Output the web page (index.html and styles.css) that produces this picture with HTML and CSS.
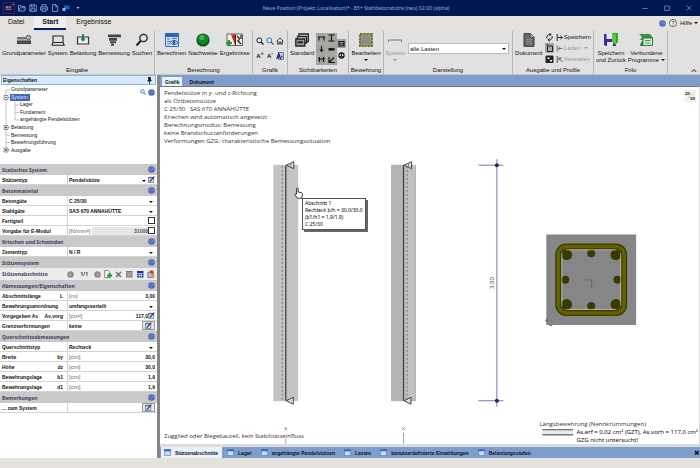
FILE: index.html
```html
<!DOCTYPE html>
<html lang="de">
<head>
    <meta charset="UTF-8">
    <meta name="viewport" content="width=device-width, initial-scale=1.0">
    <title>B5+ Stahlbetonstütze</title>
    <link rel="stylesheet" href="styles.css">
</head>
<body>
    <svg class="defs" aria-hidden="true">
        <symbol id="up" viewBox="0 0 8 8"><circle cx="4" cy="4" r="3.7" fill="#3f5fb4"/><circle cx="4" cy="4" r="2.6" fill="#7f97d6"/><path d="M2.5 4L4 2.5 5.500 4M2.500 5.800L4 4.300 5.500 5.800" fill="none" stroke="#1f3a94" stroke-width=".8"/></symbol>
        <symbol id="edit" viewBox="0 0 8 8"><path d="M.5 1.500h6v6h-6z" fill="#dbe7fa" stroke="#2a4d94" stroke-width=".7"/><path d="M.5 1.200h6v1.500h-6z" fill="#3b6fc8"/><path d="M2 6.500L6.500 1.500" stroke="#333" stroke-width="1.400"/><path d="M6.200 1.800L7.300.6" stroke="#c22" stroke-width="1.400"/></symbol>
        <symbol id="win" viewBox="0 0 7 7"><path d="M.5.5h6v6h-6z" fill="#c9dcf8" stroke="#5f82b8" stroke-width=".7"/><path d="M.3.3h6.400v2H.3z" fill="#3566c4"/></symbol>
        <symbol id="zoom" viewBox="0 0 8 8"><circle cx="3.300" cy="3.300" r="2.400" fill="#eef3fa" stroke="currentColor"/><path d="M5.100 5.100L7.500 7.500" stroke="currentColor" stroke-width="1.300"/></symbol>
    </svg>

    <header class="titlebar">
        <div class="quick">
            <svg width="12" height="12" viewBox="0 0 12 12"><path d="M.5.5h11v11H.5z" fill="#1a1244" stroke="#3a3a78" stroke-width=".6"/><text x="2.500" y="8" font-size="5" fill="#b9b4e0">B5</text><path d="M9 2.500h2M10 1.500v2" stroke="#aaa5dd" stroke-width=".5"/></svg>
            <svg width="8" height="8" viewBox="0 0 8 8" fill="none" stroke="#8fb0e0" stroke-width=".8"><path d="M.5 7V1.500h2.500l.8 1h3v1.300M.5 7l1.500-3.200h5.500L6.300 7z"/></svg>
            <svg width="8" height="8" viewBox="0 0 8 8" fill="none" stroke="#8fb0e0" stroke-width=".8"><path d="M.8.8h5.700l.8.8v5.700H.8zM2.300 1v2h3V1M2 7V4.800h4V7"/></svg>
            <svg width="8" height="8" viewBox="0 0 8 8" fill="none" stroke="#8fb0e0" stroke-width=".8"><path d="M2 3V.7h4V3M2 6H.6V3h6.800v3H6M2 4.800h4v2.500H2z"/></svg>
            <svg width="8" height="8" viewBox="0 0 8 8" fill="none" stroke="#8fb0e0" stroke-width=".8"><path d="M1.500.6h3.300l1.800 1.900v4.900H1.500zM4.700.7v2h2"/></svg>
            <svg width="8" height="8" viewBox="0 0 8 8"><path d="M2 1.500h5.500v3.500H2z" fill="#1d5fd0"/><path d="M.5 4h3v3h-3z" fill="#7fb6f5"/></svg>
            <svg class="more" width="4" height="4" viewBox="0 0 4 4"><path d="M.5 1h3L2 3z" fill="#b8c8e8"/></svg>
        </div>
        <h1>Neue Position (Projekt: Localisation)* - B5+ Stahlbetonstütze (neu) 02/20 (alpha)</h1>
        <div class="winbtns">
            <button aria-label="Minimieren"><svg width="6" height="6" viewBox="0 0 6 6" stroke="#6f8fd0" stroke-width=".8"><path d="M.5 3.500h5"/></svg></button>
            <button aria-label="Maximieren"><svg width="6" height="6" viewBox="0 0 6 6" fill="none" stroke="#6f8fd0" stroke-width=".8"><path d="M.7 1h4.600v4.500H.7z"/></svg></button>
            <button aria-label="Schließen"><svg width="6" height="6" viewBox="0 0 6 6" stroke="#6f8fd0" stroke-width=".8"><path d="M.7.700l4.600 4.600M5.300.700L.7 5.300"/></svg></button>
        </div>
    </header>

    <nav class="menu">
        <button>Datei</button>
        <button class="active">Start</button>
        <button>Ergebnisse</button>
        <div class="help">
            <svg width="7" height="7"><use href="#up"/></svg>
            <svg width="8" height="8" viewBox="0 0 8 8"><circle cx="4" cy="4" r="3.500" fill="#fff" stroke="#222" stroke-width=".7"/><path d="M2.900 3.200c0-1.500 2.300-1.400 2.200 0-.1.900-1.100.8-1.100 1.700M4 5.500v.8" fill="none" stroke="#222" stroke-width=".8"/></svg>
            <button class="arrow">Hilfe</button>
        </div>
    </nav>

    <section class="ribbon">
        <div class="group">
            <div class="tools">
                <button class="tool"><svg width="16" height="14" viewBox="0 0 16 14"><path d="M1 4h9v2.500H1z" fill="#777"/><path d="M1 7.500h14v3.500H1z" fill="#333"/><circle cx="12.500" cy="4.500" r="2.200" fill="#bbb" stroke="#555"/><path d="M2 9.300h12" stroke="#999" stroke-width=".6"/></svg>Grundparameter</button>
                <button class="tool"><svg width="14" height="14" viewBox="0 0 14 14" fill="none" stroke="#222" stroke-width="1.100"><path d="M2 3h10v6.500H2zM.8 12.300h12.400L12 9.500M2 9.500L.8 12.300"/></svg>System</button>
                <button class="tool"><svg width="14" height="14" viewBox="0 0 14 14"><path d="M1.500 4h11v7h-11z" fill="#eee" stroke="#333" stroke-width="1.200"/><path d="M7 1v6" stroke="#0b6a6a" stroke-width="1.600"/><path d="M4.500 5.500h5L7 8.700z" fill="#0b6a6a"/></svg>Belastung</button>
                <button class="tool"><svg width="14" height="14" viewBox="0 0 14 14" fill="#444"><path d="M1 1.500h13v2.800H1zM2 5h8v2.700H2zM3 8.300h6v2H3zM4 10.800h3v2H4z"/></svg>Bemessung</button>
                <button class="tool"><svg width="14" height="14" viewBox="0 0 14 14" fill="none" stroke="#222"><circle cx="8.500" cy="5" r="3.700" stroke-width="1.300"/><path d="M5.800 7.800L1.500 12.500" stroke-width="2"/></svg>Suchen</button>
            </div>
            <h2>Eingabe</h2>
        </div>
        <div class="group">
            <div class="tools">
                <button class="tool"><svg width="14" height="14" viewBox="0 0 14 14"><path d="M.5.5h13v13H.5z" fill="#cfe2f7" stroke="#3a6cb5"/><path d="M.5.5h13v3.500H.5z" fill="#2f62c0"/><path d="M2 6h3M2 8.500h3M2 11h3M7 5.500h5" stroke="#4779bd" stroke-width="1.200"/><path d="M5 9.500q4-4 8 0-4 4-8 0z" fill="#fff" stroke="#1c4d96"/><circle cx="9" cy="9.500" r="1.400" fill="#124a9b"/></svg>Berechnen</button>
                <button class="tool"><svg width="14" height="14" viewBox="0 0 14 14"><circle cx="7" cy="7" r="6.600" fill="#0a5a17"/><circle cx="7" cy="6.300" r="5.300" fill="#12872a"/><circle cx="5.800" cy="4.500" r="2.500" fill="#3fb257"/></svg>Nachweise</button>
                <button class="tool"><svg width="17" height="14" viewBox="0 0 17 14"><path d="M1 1h15.500v11.500H1z" fill="#f2efe4" stroke="#444" stroke-width=".8"/><path d="M5 1.500l4 10.500V1.500z" fill="#d22"/><path d="M9.500 1.500v10.500" stroke="#222"/><path d="M11 3q4 3 1 5l3 3M15 2v4" stroke="#222" fill="none" stroke-width="1.300"/><path d="M0 10h6M3 7v6" stroke="#159a2d" stroke-width="2"/></svg>Ergebnisse</button>
            </div>
            <h2>Berechnung</h2>
        </div>
        <div class="group">
            <div class="grid3">
                <button aria-label="Lupe"><svg width="8" height="8"><use href="#zoom"/></svg></button>
                <button class="blue" aria-label="Zoom"><svg width="8" height="8"><use href="#zoom"/></svg></button>
                <button aria-label="Gesamtansicht"><svg width="8" height="8" viewBox="0 0 8 8" fill="#eee" stroke="#222" stroke-width=".9"><path d="M.7 4.300L4 1l3.300 3.300M1.700 3.800v3.400h1.500V5h1.600v2.200h1.500V3.800"/></svg></button>
                <button>A<sup>+</sup></button>
                <button>A<sup>-</sup></button>
                <button aria-label="Schriftfarbe"><svg width="8" height="8" viewBox="0 0 8 8"><path d="M2.500.5H7.500v7h-5z" fill="#bcd0f2" stroke="#2c4ea3" stroke-width=".7"/><path d="M5 3l2.500 2.500H5z" fill="#c22"/><path d="M.7 7L2.700 1.500 4.700 7M1.500 5.200h2.500" fill="none" stroke="#15235c" stroke-width="1.100"/></svg></button>
            </div>
            <h2>Grafik</h2>
        </div>
        <div class="group">
            <div class="tools">
                <button class="tool"><svg width="14" height="14" viewBox="0 0 14 14" fill="none" stroke="#222" stroke-width="1.300"><path d="M4 4V1h9.300v7.500H11M2.500 6V3.500h9V10H9.500"/><path d="M.8 6h9v7h-9z" fill="#999"/><path d="M2.500 9.300h5.500" stroke-width="2"/></svg>Standard</button>
                <svg class="toggles" width="30" height="34" viewBox="0 0 30 34">
                    <path d="M0 1h21v32H0zM21 7h9v9h-9z" fill="#a5a39f"/>
                    <path d="M.2 11.500h20.600M.2 22.500h20.600M10.500 1v32" stroke="#bbb9b5" stroke-width=".5"/>
                    <g fill="none" stroke="#111" stroke-width="1.100"><path d="M2 5h7M3 5v3.500M8 5v3.500M12.500 3h6M12.500 9h6M15.500 3v6M5.500 14v5M3.800 17.500l1.700 2 1.700-2M2 27h7M3.500 25v5M7.500 25v5M13 25v5.500h6M13 30.500l5-5M23 9.500h5v4.500h-5zM23 12h5"/><path d="M12.500 17.300h6" stroke-width="2.400"/><circle cx="25.500" cy="23.500" r="2.600" fill="#eee"/><path d="M25.500 21v3l2 1M25.500 24l-2 1"/></g>
                </svg>
            </div>
            <h2>Sichtbarkeiten</h2>
        </div>
        <div class="group">
            <div class="tools">
                <button class="tool"><svg width="14" height="14" viewBox="0 0 14 14"><path d="M1 1h12v12H1z" fill="#999" stroke="#77751c" stroke-width="2" stroke-dasharray="2.500 .7"/><path d="M3 3h8v8H3z" fill="#8a8a88"/></svg>Bearbeiten<i class="tri"></i></button>
            </div>
            <h2>Bewehrung</h2>
        </div>
        <div class="group">
            <div class="tools wide">
                <button class="tool" disabled><svg width="16" height="14" viewBox="0 0 16 14" fill="none" stroke="#777"><path d="M1.500 9V7h13v2"/></svg>System<i class="tri"></i></button>
                <label class="drop"><select aria-label="Lasten"><option>alle Lasten</option></select></label>
            </div>
            <h2>Darstellung</h2>
        </div>
        <div class="group">
            <div class="tools">
                <button class="tool"><svg width="12" height="14" viewBox="0 0 12 14"><path d="M1 .7h6.500L11 4.200v9.100H1z" fill="#6d6d6d" stroke="#333"/><path d="M7.300.7v3.700H11" fill="#ccc" stroke="#333" stroke-width=".7"/><path d="M3 6.500h6M3 8.500h6M3 10.500h6" stroke="#999" stroke-width=".6"/></svg>Dokument</button>
                <svg class="toggles" width="9" height="32" viewBox="0 0 9 32" fill="none" stroke="#222"><path d="M0 11h9v10H0z" fill="#a9a7a3" stroke="none"/><path d="M2 6.500A3 3 0 0 1 5.500 2.500M7 4a3 3 0 0 1-3.500 4M4.500 1l1.500 1.500-1.500 1.500M4.500 6.500L3 8l1.500 1.500"/><path d="M2.500 14h5v5.500h-5z"/><path d="M1 13h3M2.500 11.700v3" stroke="#0a8a2a"/><path d="M1 24h7v6.500H1z" fill="#222"/><path d="M2.500 25.500h2v1.500h-2zM5 28h2v1.500H5z" fill="#fff" stroke="none"/></svg>
                <div class="stack">
                    <button><svg width="7" height="7" viewBox="0 0 7 7" stroke="#222"><path d="M1.200 0v7M2 3.500h4.500M4.500 1.800l1.800 1.700-1.800 1.700" fill="none"/></svg>Speichern</button>
                    <button disabled class="arrow"><svg width="7" height="7" viewBox="0 0 7 7" stroke="#777"><path d="M1.200 0v7M2 3.500h4.500M4 1.800L2.300 3.500 4 5.200" fill="none"/></svg>Laden</button>
                    <button disabled><svg width="7" height="7" viewBox="0 0 7 7" stroke="#555"><path d="M1.200 0v7M3 2l3.500 4M3 4.500V2h2.500" fill="none"/></svg>Verwalten</button>
                </div>
            </div>
            <h2>Ausgabe und Profile</h2>
        </div>
        <div class="group">
            <div class="tools">
                <button class="tool"><svg width="14" height="14" viewBox="0 0 14 14"><path d="M0 1h12v12H1.500L0 11.500z" fill="#3d2a9a"/><path d="M2.500 1h6v5h-6zM3 9h6v4H3z" fill="#e6e4f5"/><path d="M8 0h6v9l-3 3V3z" fill="#39a52c"/><path d="M8 0l4 2v10L8 9z" fill="#58c83e"/></svg><span>Speichern<br>und Zurück</span></button>
                <button class="tool"><svg width="15" height="14" viewBox="0 0 15 14"><path d="M0 1h11l3 4-3 2H1l2-3z" fill="#36943a"/><path d="M4 5h9.500v7.500H4z" fill="#d9eddd" stroke="#2b7b33"/><path d="M6 7.500h5.500M6 10h5.500" stroke="#3a9a45"/><path d="M1 13q1-5 3-5v5z" fill="#2b7b33"/></svg><span class="arrow">Verbundene<br>Programme</span></button>
            </div>
            <h2>Frilo</h2>
        </div>
        <div class="group last"><button aria-label="Menüband reduzieren"><svg width="6" height="5" viewBox="0 0 6 5"><path d="M.8 4L3 1.500 5.200 4" fill="none" stroke="#222"/></svg></button></div>
    </section>

    <main>
        <aside class="props">
            <header class="caption">Eigenschaften<svg width="5" height="7" viewBox="0 0 5 7" fill="#111"><path d="M1.200 0h2.600v3.300h.8v1H.4v-1h.8zM2.100 4h.8v3h-.8z"/></svg></header>
            <div class="tree">
                <svg class="lines" width="24" height="68" viewBox="0 0 24 68" fill="none" stroke="#aaa" stroke-width=".7">
                    <path d="M6 4v60M6 4h4M6 11.500h4M6 41.500h4M6 49h4M6 56.500h4M6 64h4M15 16v18M15 19h4M15 26.500h4M15 34h4"/>
                    <path d="M4 9.500h4v4H4zM4 39.500h4v4H4zM4 62h4v4H4z" fill="#fff" stroke="#667"/>
                    <path d="M5 11.500h2M5 41.500h2M6 40.500v2M5 64h2M6 63v2" stroke="#112"/>
                </svg>
                <ul>
                    <li>Grundparameter</li>
                    <li><span class="selected">System</span></li>
                    <li class="sub">Lager</li>
                    <li class="sub">Fundament</li>
                    <li class="sub">angehängte Pendelstützen</li>
                    <li>Belastung</li>
                    <li>Bemessung</li>
                    <li>Bewehrungsführung</li>
                    <li>Ausgabe</li>
                </ul>
                <div class="treetools"><svg class="blue" width="6" height="6"><use href="#zoom"/></svg><svg width="7" height="7"><use href="#up"/></svg></div>
            </div>

            <h3>Statisches System<svg><use href="#up"/></svg></h3>
            <div class="row"><label for="typ">Stützentyp</label><span class="drop"><select id="typ"><option>Pendelstütze</option></select></span><button class="edit" aria-label="Stützentyp bearbeiten"><svg><use href="#edit"/></svg></button></div>

            <h3>Betonmaterial<svg><use href="#up"/></svg></h3>
            <div class="row"><label for="beton">Betongüte</label><span class="drop"><select id="beton"><option>C 25/30</option></select></span></div>
            <div class="row"><label for="stahl">Stahlgüte</label><span class="drop"><select id="stahl"><option>SAS 670 ANNAHÜTTE</option></select></span></div>
            <div class="row"><label for="fertig">Fertigteil</label><span class="fill"></span><input type="checkbox" id="fertig"></div>
            <div class="row"><label for="emodul">Vorgabe für E-Modul</label><span class="unit">[N/mm²]</span><input type="text" class="locked" id="emodul" value="31000" readonly><input type="checkbox" aria-label="E-Modul vorgeben"></div>

            <h3>Kriechen und Schwinden<svg><use href="#up"/></svg></h3>
            <div class="row"><label for="zement">Zementtyp</label><span class="drop"><select id="zement"><option>N / R</option></select></span></div>

            <h3>Stützensystem<svg><use href="#up"/></svg></h3>
            <div class="sections">
                <span>Stützenabschnitte</span>
                <div class="pager">
                    <button aria-label="Zurück"><svg width="7" height="7" viewBox="0 0 7 7"><circle cx="3.500" cy="3.500" r="3.200" fill="#888"/><path d="M4.200 2L2.700 3.500 4.200 5" fill="none" stroke="#ddd"/></svg></button>
                    <span>1/1</span>
                    <button aria-label="Vor"><svg width="7" height="7" viewBox="0 0 7 7"><circle cx="3.500" cy="3.500" r="3.200" fill="#888"/><path d="M2.800 2l1.500 1.500L2.800 5" fill="none" stroke="#ddd"/></svg></button>
                    <button aria-label="Neu"><svg width="8" height="8" viewBox="0 0 8 8"><path d="M.7.5h3.500l1.500 1.500v5.500h-5z" fill="#fff" stroke="#555" stroke-width=".7"/><path d="M3 5.500h5M5.500 3v5" stroke="#159a2d" stroke-width="1.800"/></svg></button>
                    <button aria-label="Löschen"><svg width="7" height="7" viewBox="0 0 7 7" stroke="#666" stroke-width="1.300"><path d="M1 1l5 5M6 1L1 6"/></svg></button>
                    <button aria-label="Tabelle"><svg width="8" height="8" viewBox="0 0 8 8"><path d="M1 1h6.500v6.500H1z" fill="#777"/><path d="M1 3h6.500M1 5.200h6.500M3.200 3v4.500M5.300 3v4.500" stroke="#ddd" stroke-width=".5"/></svg></button>
                    <button aria-label="Tabelle bearbeiten"><svg width="8" height="8" viewBox="0 0 8 8"><path d="M1 1h6.500v6.500H1z" fill="#123a7d"/><path d="M1 3.500h6.500M1 5.500h6.500M3.200 3.500v4M5.300 3.500v4" stroke="#dfe8f8" stroke-width=".7"/></svg></button>
                    <button aria-label="Eingabehilfe"><svg width="8" height="8" viewBox="0 0 8 8"><path d="M1 2h5v5.500H1z" fill="#b9c9e8" stroke="#2a4d94" stroke-width=".7"/><path d="M3 .5h3.500v3H3z" fill="#c33"/><path d="M4 4.500h3.500v3H4z" fill="#e59a2a"/></svg></button>
                </div>
            </div>

            <h3>Abmessungen/Eigenschaften<svg><use href="#up"/></svg></h3>
            <div class="row"><label for="len">Abschnittslänge <b>L</b></label><span class="unit">[m]</span><input type="text" id="len" value="3,00"></div>
            <div class="row"><label for="anord">Bewehrungsanordnung</label><span class="drop"><select id="anord"><option>umfangsverteilt</option></select></span></div>
            <div class="row"><label for="as">Vorgegeben As <b>As,vorg</b></label><span class="unit">[cm²]</span><input type="text" id="as" value="117,0"><button class="edit" aria-label="As bearbeiten"><svg><use href="#edit"/></svg></button></div>
            <div class="row"><label for="grenz">Grenzverformungen</label><input type="text" class="left" id="grenz" value="keine"><button class="edit framed" aria-label="Grenzverformungen bearbeiten"><svg><use href="#edit"/></svg></button></div>

            <h3>Querschnittsabmessungen<svg><use href="#up"/></svg></h3>
            <div class="row"><label for="quer">Querschnittstyp</label><span class="drop"><select id="quer"><option>Rechteck</option></select></span></div>
            <div class="row"><label for="by">Breite <b>by</b></label><span class="unit">[cm]</span><input type="text" id="by" value="30,0"></div>
            <div class="row"><label for="dz">Höhe <b>dz</b></label><span class="unit">[cm]</span><input type="text" id="dz" value="30,0"></div>
            <div class="row"><label for="b1">Bewehrungslage <b>b1</b></label><span class="unit">[cm]</span><input type="text" id="b1" value="1,9"></div>
            <div class="row"><label for="d1">Bewehrungslage <b>d1</b></label><span class="unit">[cm]</span><input type="text" id="d1" value="1,9"></div>

            <h3>Bemerkungen<svg><use href="#up"/></svg></h3>
            <div class="row"><label for="bem">... zum System</label><input type="text" class="left" id="bem" value=""><button class="edit framed" aria-label="Bemerkung bearbeiten"><svg><use href="#edit"/></svg></button></div>
        </aside>

        <section class="view">
            <div class="viewtabs">
                <button class="active">Grafik</button>
                <button>Dokument</button>
            </div>
            <div class="canvas">
                <svg class="drawing" viewBox="160 87 540 357">
                    <!-- elevations -->
                    <path d="M274 165h24v236h-24z" fill="#c4c4c4" stroke="#aaa" stroke-width=".5"/>
                    <path d="M282.500 166v235" stroke="#777" stroke-dasharray="2 2"/>
                    <path d="M286 165v236" stroke="#444" stroke-width="1.300"/>
                    <path d="M392 165h24v236h-24z" fill="#c0c0c0" stroke="#888" stroke-width=".5"/>
                    <path d="M392 165h12v236h-12z" fill="#b4b4b4"/>
                    <path d="M407.500 166v235" stroke="#777" stroke-dasharray="2 2"/>
                    <path d="M404 165v236" stroke="#444" stroke-width="1.300"/>
                    <g fill="#ddd" stroke="#333" stroke-width=".9">
                        <path d="M286.500 165l7.500-3.500v7zM404.500 165l7.500-3.500v7zM286.500 401l7-3.500v7zM404.500 401l7-3.500v7z"/>
                        <path d="M291 163v4.500M409 163v4.500" stroke="#777"/>
                    </g>
                    <path d="M286 439v5M404 433v11" stroke="#888" stroke-width=".8"/>
                    <path d="M284.500 427.500l3 3M287.500 427.500l-3 3M402.500 427.500l3 3M405.500 427.500l-3 3" stroke="#777" stroke-width=".7"/>
                    <!-- dimension line -->
                    <path d="M497.500 159v248M479 165h25M479 401h25" stroke="#6a6a9c" stroke-width=".9"/>
                    <circle cx="497.500" cy="165" r="2" fill="#22225c"/><circle cx="497.500" cy="401" r="2" fill="#22225c"/>
                    <text class="dim" transform="translate(495 289) rotate(-90)">3.00</text>
                    <!-- cross section -->
                    <path d="M547 234.500h90v90.500h-90z" fill="#868686"/>
                    <rect x="559" y="246.500" width="66" height="66.500" rx="8" fill="none" stroke="#3a3a00" stroke-width="6"/>
                    <rect x="559" y="246.500" width="66" height="66.500" rx="8" fill="none" stroke="#626200" stroke-width="3.500"/>
                    <g fill="#3a3a00"><circle cx="567.500" cy="254.700" r="5.400"/><circle cx="616.700" cy="254.700" r="5.400"/><circle cx="567.500" cy="304.500" r="5.400"/><circle cx="616.700" cy="304.500" r="5.400"/><circle cx="592" cy="253.300" r="4"/><circle cx="566" cy="279.700" r="4"/><circle cx="618.300" cy="279.700" r="4"/><circle cx="592" cy="306" r="4"/></g>
                    <path d="M562.500 253v53M621.500 253v53M567 249.800h50M567 309.500h50" stroke="#c9c9c0" stroke-width=".7"/>
                    <path d="M585 280h7.500v8" fill="none" stroke="#555570" stroke-width=".8" stroke-dasharray="5 1"/>
                    <path d="M546 320.500h3M547.500 319v3M550 325.500h3" stroke="#5b5b90"/>
                    <!-- legend bars -->
                    <path d="M543 430h31M543 435h31" stroke="#777" stroke-width="1.600"/>
                    <path d="M543 432.500h31" stroke="#e6eae6" stroke-width="3"/>
                    <!-- 2D/3D switch -->
                    <g><path d="M686 90h11v11h-11z" fill="#f8f6f2" stroke="#ddd" stroke-width=".5"/><path d="M688 99l7-7" stroke="#e9a23a" stroke-width=".8"/><text class="mini" x="686" y="95">2D</text><text class="mini" x="691" y="100">3D</text></g>
                </svg>
                <div class="notes">
                    <p>Pendelstütze in y- und z-Richtung</p>
                    <p>als Ortbetonstütze</p>
                    <p>C 25/30 &nbsp; SAS 670 ANNAHÜTTE</p>
                    <p>Kriechen wird automatisch angesetzt</p>
                    <p>Berechnungsmodus: Bemessung</p>
                    <p>keine Brandschutzanforderungen</p>
                    <p>Verformungen GZG: charakteristische Bemessungssituation</p>
                </div>
                <div class="footnotes">
                    <p>Zugglied oder Biegebauteil, kein Stabilitätseinfluss</p>
                    <div class="legend">
                        <p>Längsbewehrung (Nennkrümmungen)</p>
                        <p class="res">As,erf = 0,02 cm² (GZT), As,vorh = 117,0 cm²</p>
                        <p class="res">GZG nicht untersucht!</p>
                    </div>
                </div>
                <div class="tooltip">Abschnitt 1<br>Rechteck b/h = 30,0/30,0<br>(b1/h1 = 1,9/1,9)<br>C 25/30</div>
                <svg class="cursor" width="9" height="12" viewBox="0 0 9 12"><path d="M2.500 7V1.500q.9-1 1.700 0V5l3.300.7q1 .3.900 1.500l-.6 4H3.500L.7 7.500q.6-1.200 1.800-.5z" fill="#fff" stroke="#223" stroke-width=".9"/></svg>
            </div>
            <div class="pagetabs">
                <button class="active"><svg><use href="#win"/></svg>Stützenabschnitte</button>
                <button><svg><use href="#win"/></svg>Lager</button>
                <button><svg><use href="#win"/></svg>angehängte Pendelstützen</button>
                <button><svg><use href="#win"/></svg>Lasten</button>
                <button><svg><use href="#win"/></svg>benutzerdefinierte Einwirkungen</button>
                <button><svg><use href="#win"/></svg>Belastungsstufen</button>
                <button class="close" aria-label="Schließen"><svg viewBox="0 0 7 7" stroke="#111" stroke-width="1.500"><path d="M2 2l3.500 3.500M5.500 2L2 5.500"/></svg></button>
            </div>
        </section>
    </main>
    <footer class="statusbar"></footer>
</body>
</html>
```
FILE: styles.css
```css
* {
    box-sizing: border-box;
}
body {
    margin: 0;
    height: 100vh;
    display: flex;
    flex-direction: column;
    overflow: hidden;
    background-color: #e5e1dd;
    color: #111;
    font-family: "Liberation Sans", Arial, sans-serif;
    font-size: 6px;
    line-height: 8px;
    white-space: nowrap;
}
h1, h2, h3, p, ul {
    margin: 0;
    padding: 0;
    font-size: inherit;
    font-weight: normal;
    list-style: none;
}
button, input, select {
    margin: 0;
    padding: 0;
    border: none;
    border-radius: 0;
    background: none;
    color: inherit;
    font: inherit;
    white-space: nowrap;
}
svg {
    display: block;
    flex-shrink: 0;
}
.defs {
    display: none;
}
.blue {
    color: #2463b8;
}
.arrow::after, .tri, .drop::after {
    content: "";
    display: inline-block;
    border: 2px solid transparent;
    border-top-color: currentColor;
    border-bottom: none;
}
.arrow::after {
    margin-left: 2px;
    vertical-align: middle;
}

/* title bar */
.titlebar {
    height: 16px;
    display: grid;
    grid-template-columns: 1fr auto 1fr;
    align-items: center;
    background-color: #001753;
    color: #9fb2dc;
}
.titlebar h1 {
    font-family: "Noto Sans", sans-serif;
    font-size: 5px;
    padding-left: 12px;
}
.quick {
    display: flex;
    align-items: center;
    gap: 3px;
    padding-left: 3px;
}
.more {
    margin-left: 3px;
}
.winbtns {
    display: flex;
    justify-content: flex-end;
    gap: 16px;
    padding-right: 8px;
}

/* menu */
.menu {
    height: 14px;
    display: flex;
    align-items: stretch;
    font-size: 7px;
    line-height: 12px;
}
.menu > button {
    padding: 0 8px;
    border-bottom: 2px solid transparent;
}
.menu > button.active {
    font-weight: bold;
    border-color: #00206b;
    margin: 0 2px;
    background-color: #efefef;
}
.help {
    margin-left: auto;
    display: flex;
    align-items: center;
    gap: 3px;
    padding-right: 2px;
    font-size: 6px;
}

/* ribbon */
.ribbon {
    height: 45px;
    display: grid;
    grid-template-columns: 155px 98px 35px 61px 35px 1fr 81px 74px 32px;
    background-color: #e1e1e1;
    border-bottom: 1px solid #c4c4c4;
}
.group {
    min-width: 0;
    display: flex;
    flex-direction: column;
    justify-content: space-between;
    padding-top: 1px;
    margin-top: 1px;
    border-right: 1px solid #b4b4b4;
}
.group h2 {
    text-align: center;
    line-height: 7px;
}
.group.last {
    border: none;
    justify-content: flex-end;
    align-items: flex-end;
    padding: 0 3px 1px 0;
}
.tools {
    display: flex;
    justify-content: space-around;
    padding: 0 1px;
}
.tool {
    display: flex;
    flex-direction: column;
    align-items: center;
    line-height: 7px;
    padding-top: 1px;
}
.tool svg {
    margin-bottom: 3px;
}
.tool .tri {
    margin-top: 2px;
}
button:disabled {
    color: #999;
}
.grid3 {
    display: grid;
    grid-template-columns: repeat(3, 9px);
    justify-content: center;
    gap: 7px 1px;
    padding-top: 5px;
    line-height: 8px;
    font-weight: bold;
}
.grid3 sup {
    font-size: 5px;
    line-height: 0;
}
.stack {
    display: flex;
    flex-direction: column;
    align-items: flex-start;
    gap: 3px;
    padding-top: 1px;
}
.stack button {
    display: flex;
    align-items: center;
    gap: 1px;
}
.wide {
    justify-content: flex-start;
    gap: 3px;
    padding-right: 3px;
}
.drop {
    position: relative;
    flex: 1;
    min-width: 0;
    display: flex;
}
.drop select {
    width: 100%;
    padding-left: 1px;
    appearance: none;
}
.drop::after {
    position: absolute;
    right: 2px;
    top: 4px;
    pointer-events: none;
}
.wide .drop {
    height: 11px;
    margin-top: 11px;
    background-color: #fff;
    border: 1px solid #bbb;
}

/* property panel */
main {
    flex: 1;
    min-height: 0;
    display: flex;
}
.props {
    width: 160px;
    background-color: #fff;
    border-right: 3px solid #858585;
    font-size: 5px;
    font-weight: bold;
    overflow: hidden;
}
.caption {
    height: 10px;
    display: flex;
    align-items: center;
    justify-content: space-between;
    padding: 0 3px 0 1px;
    margin: 0 1px;
    background-color: #d8e9fb;
    border: 1px solid #8fb4e2;
}
.tree {
    position: relative;
    height: 79px;
    padding-top: 1px;
}
.tree ul {
    height: 68px;
    display: grid;
    grid-auto-rows: 1fr;
    align-items: center;
    padding-left: 11px;
    line-height: 7px;
}
.lines {
    position: absolute;
    left: 0;
    top: 1px;
}
.sub {
    padding-left: 9px;
}
.selected {
    display: inline-block;
    margin-left: -1px;
    padding: 0 2px 0 1px;
    background-color: #3f66b8;
    color: #dfe8fa;
}
.treetools {
    position: absolute;
    right: 2px;
    top: 4px;
    display: flex;
    gap: 2px;
}
.props h3, .sections {
    display: flex;
    align-items: center;
    justify-content: space-between;
    padding: 0 2px;
    color: #3d3f5c;
    font-family: "Noto Sans", sans-serif;
    font-weight: bold;
}
.props h3 {
    height: 11px;
    background-color: #c9c9c9;
}
.props h3 svg {
    width: 7px;
    height: 7px;
}
.row {
    height: 10px;
    display: flex;
    align-items: center;
    padding-right: 2px;
    border-bottom: 1px solid #d4d4d4;
}
.row label {
    width: 68px;
    height: 100%;
    display: flex;
    justify-content: space-between;
    align-items: center;
    padding: 0 4px 0 2px;
    border-right: 1px solid #d4d4d4;
}
.row input[type="text"] {
    flex: 1;
    min-width: 0;
    text-align: right;
}
.row input.left[type="text"] {
    padding-left: 1px;
    text-align: left;
}
.row .locked {
    background-color: #e6e6e6;
    color: #555;
}
.row input[type="checkbox"] {
    appearance: none;
    width: 7px;
    height: 7px;
    border: 1px solid #333;
    background-color: #fff;
}
.unit {
    padding: 0 2px 0 1px;
    color: #666;
    font-size: 6px;
    font-weight: normal;
}
.fill {
    flex: 1;
}
.edit svg {
    width: 7px;
    height: 7px;
}
.edit.framed {
    padding: 0 2px;
    border: 1px solid #999;
    background-color: #e8e8e8;
}
.sections {
    height: 12px;
    background-color: #ececec;
}
.pager {
    display: flex;
    align-items: center;
    gap: 3px;
}
.pager span {
    padding: 0 3px;
}

/* drawing area */
.view {
    flex: 1;
    min-width: 0;
    display: flex;
    flex-direction: column;
}
.viewtabs {
    height: 11px;
    display: flex;
    align-items: flex-end;
    gap: 4px;
    padding-left: 2px;
    background-color: #7f9dcc;
    font-size: 5px;
    font-weight: bold;
}
.viewtabs button {
    height: 9px;
    padding: 0 3px;
}
.viewtabs .active, .pagetabs .active {
    background-color: #e9f1fc;
}
.canvas {
    position: relative;
    flex: 1;
    min-height: 0;
    display: flex;
    flex-direction: column;
    justify-content: space-between;
    background-color: #fff;
    border-top: 1px solid #777;
    border-right: 1px solid #ddd;
    font-family: "Open Sans", "Noto Sans", sans-serif;
    color: #333;
}
.drawing {
    position: absolute;
    inset: 0;
    width: 100%;
    height: 100%;
}
.dim {
    font-size: 6px;
    fill: #333;
}
.mini {
    font-size: 4px;
    font-weight: bold;
    fill: #222;
}
.notes {
    position: relative;
    padding: 2px 4px;
    font-size: 6px;
    line-height: 8px;
}
.footnotes {
    position: relative;
    display: flex;
    justify-content: space-between;
    align-items: flex-end;
    padding: 0 1px 0 4px;
}
.footnotes > p {
    padding-bottom: 4px;
}
.res {
    padding-left: 37px;
    color: #111;
    font-family: "Noto Sans", sans-serif;
}
.tooltip {
    position: absolute;
    left: 142px;
    top: 111px;
    padding: 1px 2px;
    background-color: #fff;
    border: 1px solid #555;
    box-shadow: 2px 2px 0 #666;
    color: #000;
    font-family: "Noto Sans", sans-serif;
    font-size: 5px;
    line-height: 7px;
}
.cursor {
    position: absolute;
    left: 134px;
    top: 100px;
}
.pagetabs {
    height: 14px;
    display: flex;
    gap: 2px;
    padding: 0 0 0 1px;
    border-top: 3px solid #dcdcdc;
    background-color: #7f9dcc;
    font-size: 5px;
    font-weight: bold;
}
.pagetabs button {
    display: flex;
    align-items: center;
    gap: 4px;
    padding: 0 4px 0 3px;
}
.pagetabs svg {
    width: 7px;
    height: 7px;
}
.pagetabs .close {
    margin-left: auto;
    padding: 0;
}
.statusbar {
    height: 10px;
}
```
